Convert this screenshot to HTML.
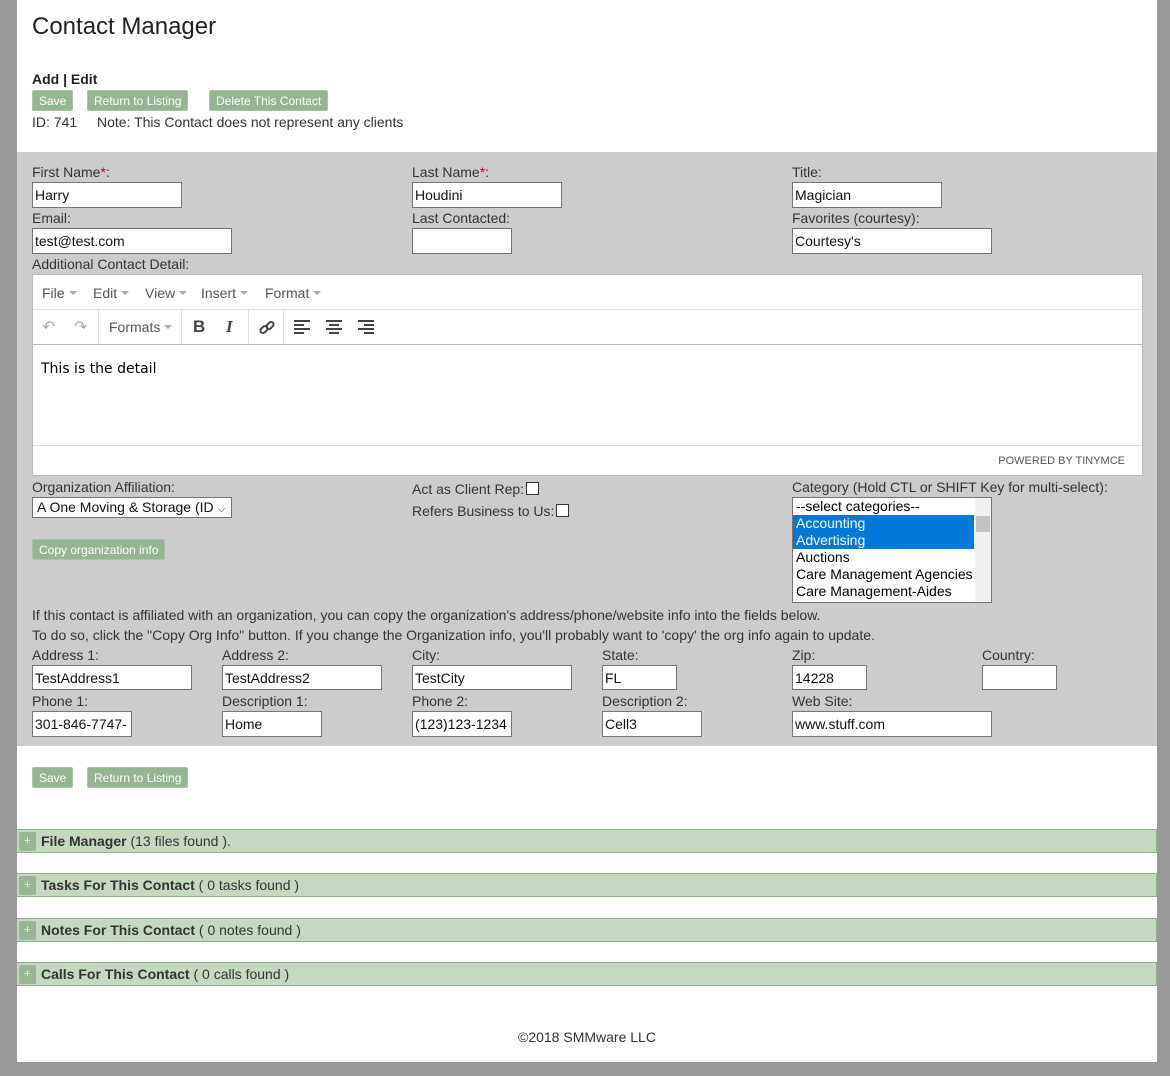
<!DOCTYPE html>
<html><head><meta charset="utf-8"><style>
*{box-sizing:border-box;margin:0;padding:0}
body{width:1170px;height:1076px;background:#999;font-family:"Liberation Sans",sans-serif;font-size:14px;color:#333;position:relative;overflow:hidden}
.a{position:absolute;white-space:nowrap}
#w{position:absolute;left:17px;top:0;width:1140px;height:1062px;background:#fff}
#g{position:absolute;left:17px;top:152px;width:1140px;height:594px;background:#ccc}
.btn{position:absolute;height:21px;background:#95b592;color:#fff;font-size:12px;line-height:21px;padding:0 6px;border-radius:2px;border:1px solid #a9c2a6}
.in{position:absolute;height:26px;background:#fff;border:1px solid #767676;padding:0 2px;line-height:24px;color:#111}
.lbl{position:absolute;white-space:nowrap;line-height:16px}
.req{color:#c00}
.bar{position:absolute;left:17px;width:1140px;height:24px;background:#c5d9c1;border-top:1px solid #8fb08f;border-bottom:1px solid #8fb08f;border-right:1px solid #8fb08f}
.bar .p{position:absolute;left:2px;top:2px;width:17px;height:19px;background:#97b794;color:#fff;font-size:11px;text-align:center;line-height:19px;border-radius:2px}
.bar .t{position:absolute;left:24px;top:3px;line-height:16px}
.cb{display:inline-block;width:13px;height:13px;border:1px solid #333;background:#fff;vertical-align:-1px;margin-left:2px}
.mi{position:absolute;top:10px;color:#555;line-height:16px}
.car{display:inline-block;border-left:4px solid transparent;border-right:4px solid transparent;border-top:4px solid #aaa;vertical-align:3px;margin-left:4px}
</style></head><body>
<div id="w"></div><div id="g"></div>
<div class="a" style="left:32px;top:13px;font-size:24px;color:#222">Contact Manager</div>
<div class="a" style="left:32px;top:71px;font-weight:bold;color:#222">Add | Edit</div>
<div class="btn" style="left:32px;top:90px">Save</div>
<div class="btn" style="left:87px;top:90px">Return to Listing</div>
<div class="btn" style="left:209px;top:90px">Delete This Contact</div>
<div class="a" style="left:32px;top:114px">ID: 741</div>
<div class="a" style="left:97px;top:114px">Note: This Contact does not represent any clients</div>

<div class="lbl" style="left:32px;top:164px">First Name<span class="req">*</span>:</div>
<div class="lbl" style="left:412px;top:164px">Last Name<span class="req">*</span>:</div>
<div class="lbl" style="left:792px;top:164px">Title:</div>
<div class="in" style="left:32px;top:182px;width:150px">Harry</div>
<div class="in" style="left:412px;top:182px;width:150px">Houdini</div>
<div class="in" style="left:792px;top:182px;width:150px">Magician</div>
<div class="lbl" style="left:32px;top:210px">Email:</div>
<div class="lbl" style="left:412px;top:210px">Last Contacted:</div>
<div class="lbl" style="left:792px;top:210px">Favorites (courtesy):</div>
<div class="in" style="left:32px;top:228px;width:200px">test@test.com</div>
<div class="in" style="left:412px;top:228px;width:100px"></div>
<div class="in" style="left:792px;top:228px;width:200px">Courtesy's</div>
<div class="lbl" style="left:32px;top:256px">Additional Contact Detail:</div>

<div class="a" style="left:32px;top:274px;width:1111px;height:202px;background:#fff;border:1px solid #bbb">
 <div class="a" style="left:0;top:0;width:1109px;height:35px;border-bottom:1px solid #e2e2e2">
  <div class="mi" style="left:9px">File<span class="car"></span></div>
  <div class="mi" style="left:60px">Edit<span class="car"></span></div>
  <div class="mi" style="left:112px">View<span class="car"></span></div>
  <div class="mi" style="left:168px">Insert<span class="car"></span></div>
  <div class="mi" style="left:232px">Format<span class="car"></span></div>
 </div>
 <div class="a" style="left:0;top:35px;width:1109px;height:35px;border-bottom:1px solid #bbb">
  <div class="a" style="left:9px;top:7px;color:#aaa;font-size:16px">↶</div>
  <div class="a" style="left:41px;top:7px;color:#aaa;font-size:16px">↷</div>
  <div class="a" style="left:65px;top:0;width:1px;height:34px;background:#e2e2e2"></div>
  <div class="mi" style="left:76px;top:9px">Formats<span class="car"></span></div>
  <div class="a" style="left:148px;top:0;width:1px;height:34px;background:#e2e2e2"></div>
  <div class="a" style="left:160px;top:7px;font-weight:bold;font-size:17px;color:#444">B</div>
  <div class="a" style="left:193px;top:7px;font-style:italic;font-weight:bold;font-size:17px;color:#444;font-family:'Liberation Serif',serif">I</div>
  <div class="a" style="left:215px;top:0;width:1px;height:34px;background:#e2e2e2"></div>
  <svg class="a" style="left:225px;top:9px" width="18" height="18" viewBox="0 0 18 18"><g fill="none" stroke="#444" stroke-width="2"><rect x="2" y="8" width="8" height="5" rx="2.5" transform="rotate(-45 6 10.5)"/><rect x="8" y="4" width="8" height="5" rx="2.5" transform="rotate(-45 12 6.5)"/></g></svg>
  <div class="a" style="left:250px;top:0;width:1px;height:34px;background:#e2e2e2"></div>
  <svg class="a" style="left:261px;top:10px" width="16" height="14"><g fill="#444"><rect y="0" width="16" height="2"/><rect y="4" width="10" height="2"/><rect y="8" width="16" height="2"/><rect y="12" width="10" height="2"/></g></svg>
  <svg class="a" style="left:293px;top:10px" width="16" height="14"><g fill="#444"><rect y="0" width="16" height="2"/><rect x="3" y="4" width="10" height="2"/><rect y="8" width="16" height="2"/><rect x="3" y="12" width="10" height="2"/></g></svg>
  <svg class="a" style="left:325px;top:10px" width="16" height="14"><g fill="#444"><rect y="0" width="16" height="2"/><rect x="6" y="4" width="10" height="2"/><rect y="8" width="16" height="2"/><rect x="6" y="12" width="10" height="2"/></g></svg>
 </div>
 <div class="a" style="left:8px;top:86px;color:#000;font-family:'DejaVu Sans',sans-serif;font-size:14px">This is the detail</div>
 <div class="a" style="left:0;top:170px;width:1109px;height:1px;background:#ddd"></div>
 <div class="a" style="right:17px;top:180px;font-size:11px;color:#555">POWERED BY TINYMCE</div>
</div>

<div class="lbl" style="left:32px;top:479px">Organization Affiliation:</div>
<div class="in" style="left:32px;top:497px;width:200px;height:21px;line-height:19px;padding-left:4px">A One Moving &amp; Storage (ID <span style="font-size:10px">⌵</span></div>
<div class="btn" style="left:32px;top:539px;font-size:12px">Copy organization info</div>
<div class="lbl" style="left:412px;top:481px">Act as Client Rep:<span class="cb"></span></div>
<div class="lbl" style="left:412px;top:503px">Refers Business to Us:<span class="cb"></span></div>
<div class="lbl" style="left:792px;top:479px">Category (Hold CTL or SHIFT Key for multi-select):</div>
<div class="a" style="left:792px;top:497px;width:200px;height:106px;background:#fff;border:1px solid #767676;overflow:hidden;line-height:17px;color:#000">
 <div style="padding-left:3px">--select categories--</div>
 <div style="padding-left:3px;background:#0078d7;color:#fff;width:181px">Accounting</div>
 <div style="padding-left:3px;background:#0078d7;color:#fff;width:181px">Advertising</div>
 <div style="padding-left:3px">Auctions</div>
 <div style="padding-left:3px">Care Management Agencies</div>
 <div style="padding-left:3px">Care Management-Aides</div>
 <div class="a" style="left:182px;top:0;width:16px;height:104px;background:#f0f0f0"></div>
 <div class="a" style="left:183px;top:18px;width:14px;height:16px;background:#c2c2c2"></div>
</div>
<div class="lbl" style="left:32px;top:607px">If this contact is affiliated with an organization, you can copy the organization's address/phone/website info into the fields below.</div>
<div class="lbl" style="left:32px;top:627px">To do so, click the "Copy Org Info" button. If you change the Organization info, you'll probably want to 'copy' the org info again to update.</div>

<div class="lbl" style="left:32px;top:647px">Address 1:</div>
<div class="lbl" style="left:222px;top:647px">Address 2:</div>
<div class="lbl" style="left:412px;top:647px">City:</div>
<div class="lbl" style="left:602px;top:647px">State:</div>
<div class="lbl" style="left:792px;top:647px">Zip:</div>
<div class="lbl" style="left:982px;top:647px">Country:</div>
<div class="in" style="left:32px;top:665px;width:160px;height:25px">TestAddress1</div>
<div class="in" style="left:222px;top:665px;width:160px;height:25px">TestAddress2</div>
<div class="in" style="left:412px;top:665px;width:160px;height:25px">TestCity</div>
<div class="in" style="left:602px;top:665px;width:75px;height:25px">FL</div>
<div class="in" style="left:792px;top:665px;width:75px;height:25px">14228</div>
<div class="in" style="left:982px;top:665px;width:75px;height:25px"></div>
<div class="lbl" style="left:32px;top:693px">Phone 1:</div>
<div class="lbl" style="left:222px;top:693px">Description 1:</div>
<div class="lbl" style="left:412px;top:693px">Phone 2:</div>
<div class="lbl" style="left:602px;top:693px">Description 2:</div>
<div class="lbl" style="left:792px;top:693px">Web Site:</div>
<div class="in" style="left:32px;top:711px;width:100px;overflow:hidden">301-846-7747-</div>
<div class="in" style="left:222px;top:711px;width:100px">Home</div>
<div class="in" style="left:412px;top:711px;width:100px;overflow:hidden">(123)123-1234</div>
<div class="in" style="left:602px;top:711px;width:100px">Cell3</div>
<div class="in" style="left:792px;top:711px;width:200px">www.stuff.com</div>

<div class="btn" style="left:32px;top:767px">Save</div>
<div class="btn" style="left:87px;top:767px">Return to Listing</div>

<div class="bar" style="top:829px"><div class="p">+</div><div class="t"><b>File Manager</b> (13 files found ).</div></div>
<div class="bar" style="top:873px"><div class="p">+</div><div class="t"><b>Tasks For This Contact</b> ( 0 tasks found )</div></div>
<div class="bar" style="top:918px"><div class="p">+</div><div class="t"><b>Notes For This Contact</b> ( 0 notes found )</div></div>
<div class="bar" style="top:962px"><div class="p">+</div><div class="t"><b>Calls For This Contact</b> ( 0 calls found )</div></div>

<div class="a" style="left:518px;top:1029px">©2018 SMMware LLC</div>
</body></html>
